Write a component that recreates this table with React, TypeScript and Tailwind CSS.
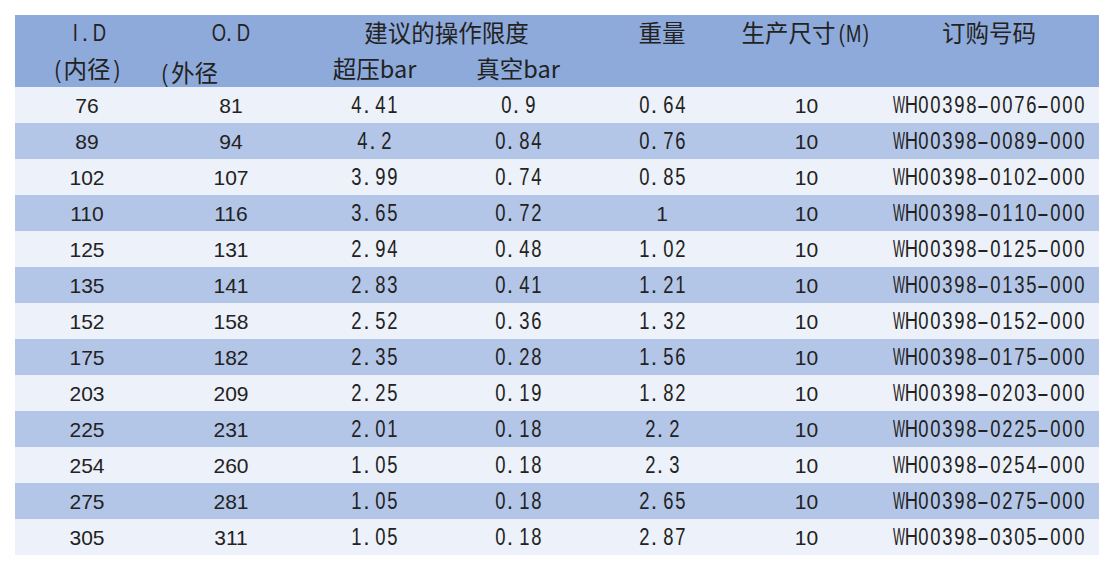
import React from 'react';
import clsx from 'clsx';

const rows = [
  ['76', '81', '4.41', '0.9', '0.64', '10', 'WH00398-0076-000'],
  ['89', '94', '4.2', '0.84', '0.76', '10', 'WH00398-0089-000'],
  ['102', '107', '3.99', '0.74', '0.85', '10', 'WH00398-0102-000'],
  ['110', '116', '3.65', '0.72', '1', '10', 'WH00398-0110-000'],
  ['125', '131', '2.94', '0.48', '1.02', '10', 'WH00398-0125-000'],
  ['135', '141', '2.83', '0.41', '1.21', '10', 'WH00398-0135-000'],
  ['152', '158', '2.52', '0.36', '1.32', '10', 'WH00398-0152-000'],
  ['175', '182', '2.35', '0.28', '1.56', '10', 'WH00398-0175-000'],
  ['203', '209', '2.25', '0.19', '1.82', '10', 'WH00398-0203-000'],
  ['225', '231', '2.01', '0.18', '2.2', '10', 'WH00398-0225-000'],
  ['254', '260', '1.05', '0.18', '2.3', '10', 'WH00398-0254-000'],
  ['275', '281', '1.05', '0.18', '2.65', '10', 'WH00398-0275-000'],
  ['305', '311', '1.05', '0.18', '2.87', '10', 'WH00398-0305-000'],
];

// the sheet uses a CJK font whose latin glyphs sit in fixed half-width cells
function Half({ text }: { text: string }) {
  return (
    <span className="inline-flex font-['Liberation_Sans',sans-serif] text-[23px] leading-none">
      {[...text].map((c, i) => (
        <span key={i} className="inline-flex w-[12px] justify-center">
          <span
            className={clsx(
              'inline-block',
              c === 'W' && 'scale-x-[0.55]',
              c === '-' && 'scale-x-[1.6]',
              c === '.' && '-translate-x-[2px]',
              c !== 'W' && c !== '-' && c !== '.' && 'scale-x-[0.8]',
            )}
          >
            {c}
          </span>
        </span>
      ))}
    </span>
  );
}

const Cjk = ({ children }: { children: React.ReactNode }) => (
  <span className="font-['Noto_Sans_CJK_SC',sans-serif] text-[23.5px] leading-none">{children}</span>
);

function Cell({ value }: { value: string }) {
  // integers were typed as numbers, decimals and codes as text
  const plain = /^\d+$/.test(value);
  return (
    <td className="h-9 p-0 text-center align-middle leading-none">
      {plain ? (
        <span className="font-['Liberation_Sans',sans-serif] text-[21px]">{value}</span>
      ) : (
        <Half text={value} />
      )}
    </td>
  );
}

export default function App() {
  return (
    <div className="min-h-screen bg-white pl-[15px] pt-[15px] text-[#222]">
      <table className="w-[1084px] table-fixed border-collapse">
        <colgroup>
          <col className="w-[144px]" />
          <col className="w-[144px]" />
          <col className="w-[143px]" />
          <col className="w-[144px]" />
          <col className="w-[144px]" />
          <col className="w-[145px]" />
          <col className="w-[220px]" />
        </colgroup>
        <thead className="bg-[#8eaadb]">
          <tr className="h-9 leading-none">
            <th className="p-0 text-center font-normal">
              <Half text="I.D" />
            </th>
            <th className="p-0 text-center font-normal">
              <Half text="O.D" />
            </th>
            <th colSpan={2} className="p-0 text-center font-normal">
              <Cjk>建议的操作限度</Cjk>
            </th>
            <th className="p-0 text-center font-normal">
              <Cjk>重量</Cjk>
            </th>
            <th className="p-0 text-center font-normal">
              <Cjk>生产尺寸</Cjk>
              <Half text="(M)" />
            </th>
            <th className="p-0 text-center font-normal">
              <Cjk>订购号码</Cjk>
            </th>
          </tr>
          <tr className="h-9 leading-none">
            <th className="p-0 text-center font-normal">
              <Half text="(" />
              <Cjk>内径</Cjk>
              <Half text=")" />
            </th>
            <th className="p-0 pt-2 text-left font-normal">
              <Half text="(" />
              <Cjk>外径</Cjk>
            </th>
            <th className="p-0 text-center font-normal">
              <Cjk>超压bar</Cjk>
            </th>
            <th className="p-0 text-center font-normal">
              <Cjk>真空bar</Cjk>
            </th>
            <th className="p-0" />
            <th className="p-0" />
            <th className="p-0" />
          </tr>
        </thead>
        <tbody>
          {rows.map((r, i) => (
            <tr key={r[0]} className={i % 2 === 0 ? 'bg-[#edf1f9]' : 'bg-[#b4c6e7]'}>
              {r.map((v, j) => (
                <Cell key={j} value={v} />
              ))}
            </tr>
          ))}
        </tbody>
      </table>
    </div>
  );
}
